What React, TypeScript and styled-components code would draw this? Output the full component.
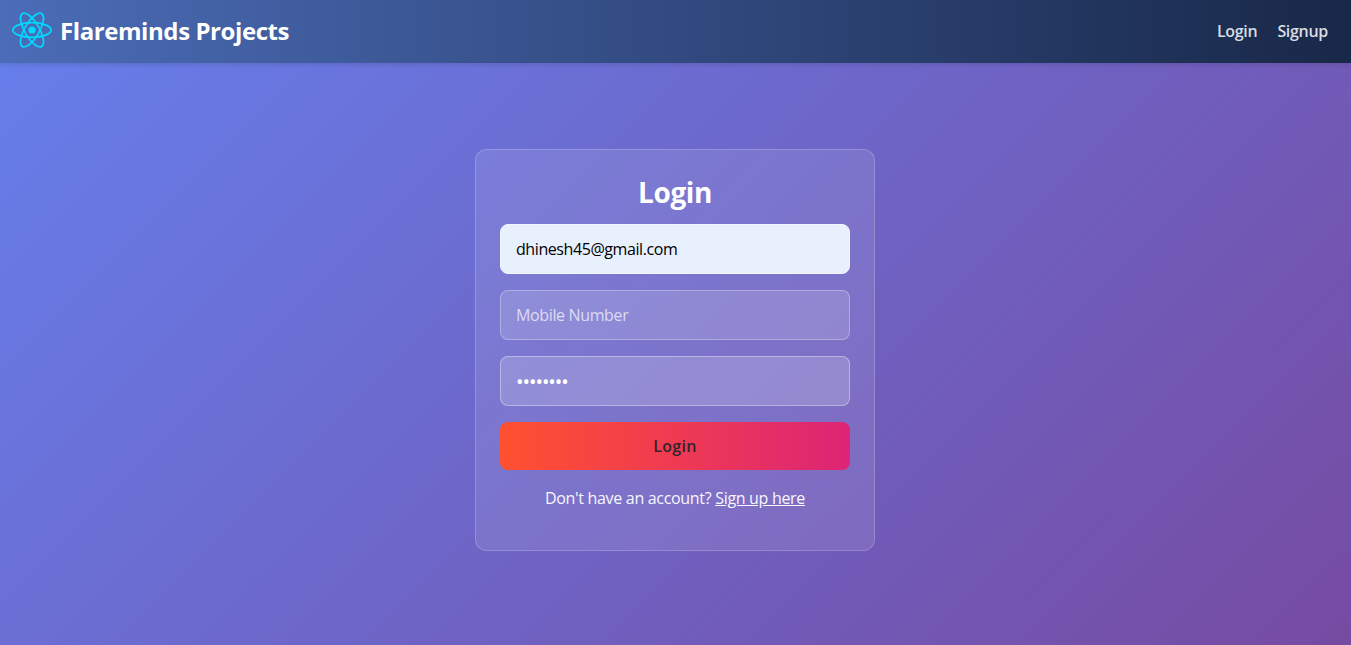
import React from "react";
import styled, { createGlobalStyle } from "styled-components";

const GlobalStyle = createGlobalStyle`
  *, *::before, *::after { box-sizing: border-box; }
  body {
    margin: 0;
    font-family: "Segoe UI", "Open Sans", "Noto Sans", sans-serif;
    font-size: 16px;
  }
`;

const Page = styled.div`
  display: flex;
  flex-direction: column;
  height: 100vh;
  overflow: hidden;
`;

const Header = styled.header`
  position: relative;
  display: flex;
  align-items: center;
  justify-content: space-between;
  flex: none;
  height: 63px;
  padding: 0 23px 2px 12px;
  background: linear-gradient(90deg, #4b6cb7, #182848);
  box-shadow: 0 2px 4px rgba(0, 0, 0, 0.1);
`;

const Brand = styled.div`
  display: flex;
  align-items: center;
  gap: 8px;
`;

const Logo = styled.svg`
  display: block;
  width: 40px;
  height: 36px;
  margin-bottom: 1px;
`;

const BrandName = styled.span`
  color: #fff;
  font-size: 24px;
  font-weight: 700;
  line-height: 36px;
  letter-spacing: -0.42px;
  white-space: nowrap;
`;

const Nav = styled.nav`
  display: flex;
  gap: 20px;
`;

const NavLink = styled.a`
  color: #d9dce3;
  font-size: 16px;
  font-weight: 600;
  line-height: 24px;
  letter-spacing: -0.3px;
  text-decoration: none;
`;

const Main = styled.main`
  display: flex;
  flex: 1;
  align-items: flex-start;
  justify-content: center;
  padding-top: 86px;
  background: linear-gradient(135deg, #667eea 0%, #764ba2 100%);
`;

const Card = styled.form`
  display: flex;
  flex-direction: column;
  width: 400px;
  height: 402px;
  margin-right: 1px;
  padding: 24px;
  border: 1px solid rgba(255, 255, 255, 0.2);
  border-radius: 12px;
  background: rgba(255, 255, 255, 0.1);
`;

const Title = styled.h2`
  margin: 0 0 14px;
  color: #fff;
  font-size: 28px;
  font-weight: 700;
  line-height: 36px;
  letter-spacing: -0.4px;
  text-align: center;
`;

const Field = styled.input<{ $filled?: boolean; $secret?: boolean }>`
  width: 100%;
  height: 50px;
  margin: 0 0 16px;
  padding: ${(p) => (p.$secret ? "1px" : "0")} 15px 0;
  border: 1px solid
    ${(p) => (p.$filled ? "#f2f6ff" : `rgba(255, 255, 255, ${p.$secret ? 0.35 : 0.3})`)};
  border-radius: 8px;
  outline: none;
  background: ${(p) =>
    p.$filled ? "#e8f0fe" : `rgba(255, 255, 255, ${p.$secret ? 0.18 : 0.15})`};
  color: ${(p) => (p.$filled ? "#000" : "#fff")};
  font-family: inherit;
  font-size: ${(p) => (p.$secret ? "20px" : "16px")};
  letter-spacing: ${(p) => (p.$secret ? "-1.05px" : "-0.42px")};
  &::placeholder { color: rgba(255, 255, 255, 0.7); opacity: 1; letter-spacing: -0.36px; }
`;

const Submit = styled.button`
  flex: none;
  height: 48px;
  margin: 0 0 16px;
  padding: 0;
  border: 0;
  border-radius: 8px;
  background: linear-gradient(to right, #ff512f, #dd2476);
  color: #34242b;
  font-family: inherit;
  font-size: 16px;
  font-weight: 600;
  letter-spacing: 0.35px;
`;

const Prompt = styled.p`
  margin: 0;
  color: #f8f6fc;
  line-height: 24px;
  letter-spacing: -0.31px;
  text-align: center;
  white-space: nowrap;
`;

const SignupLink = styled.a`
  color: inherit;
  text-decoration: underline;
`;

export default function App() {
  return (
    <>
      <GlobalStyle />
      <Page>
        <Header>
          <Brand>
            <Logo viewBox="-11.5 -10.35 23 20.7" aria-hidden="true">
              <circle r="2.05" fill="#00d8ff" />
              <g fill="none" stroke="#00d8ff" strokeWidth="1">
                <ellipse rx="11" ry="4.2" />
                <ellipse rx="11" ry="4.2" transform="rotate(60)" />
                <ellipse rx="11" ry="4.2" transform="rotate(120)" />
              </g>
            </Logo>
            <BrandName>Flareminds Projects</BrandName>
          </Brand>
          <Nav>
            <NavLink>Login</NavLink>
            <NavLink>Signup</NavLink>
          </Nav>
        </Header>
        <Main>
          <Card>
            <Title>Login</Title>
            <Field $filled type="text" defaultValue="dhinesh45@gmail.com" />
            <Field type="text" placeholder="Mobile Number" />
            <Field $secret type="password" defaultValue="password" />
            <Submit type="button">Login</Submit>
            <Prompt>
              Don't have an account? <SignupLink>Sign up here</SignupLink>
            </Prompt>
          </Card>
        </Main>
      </Page>
    </>
  );
}
